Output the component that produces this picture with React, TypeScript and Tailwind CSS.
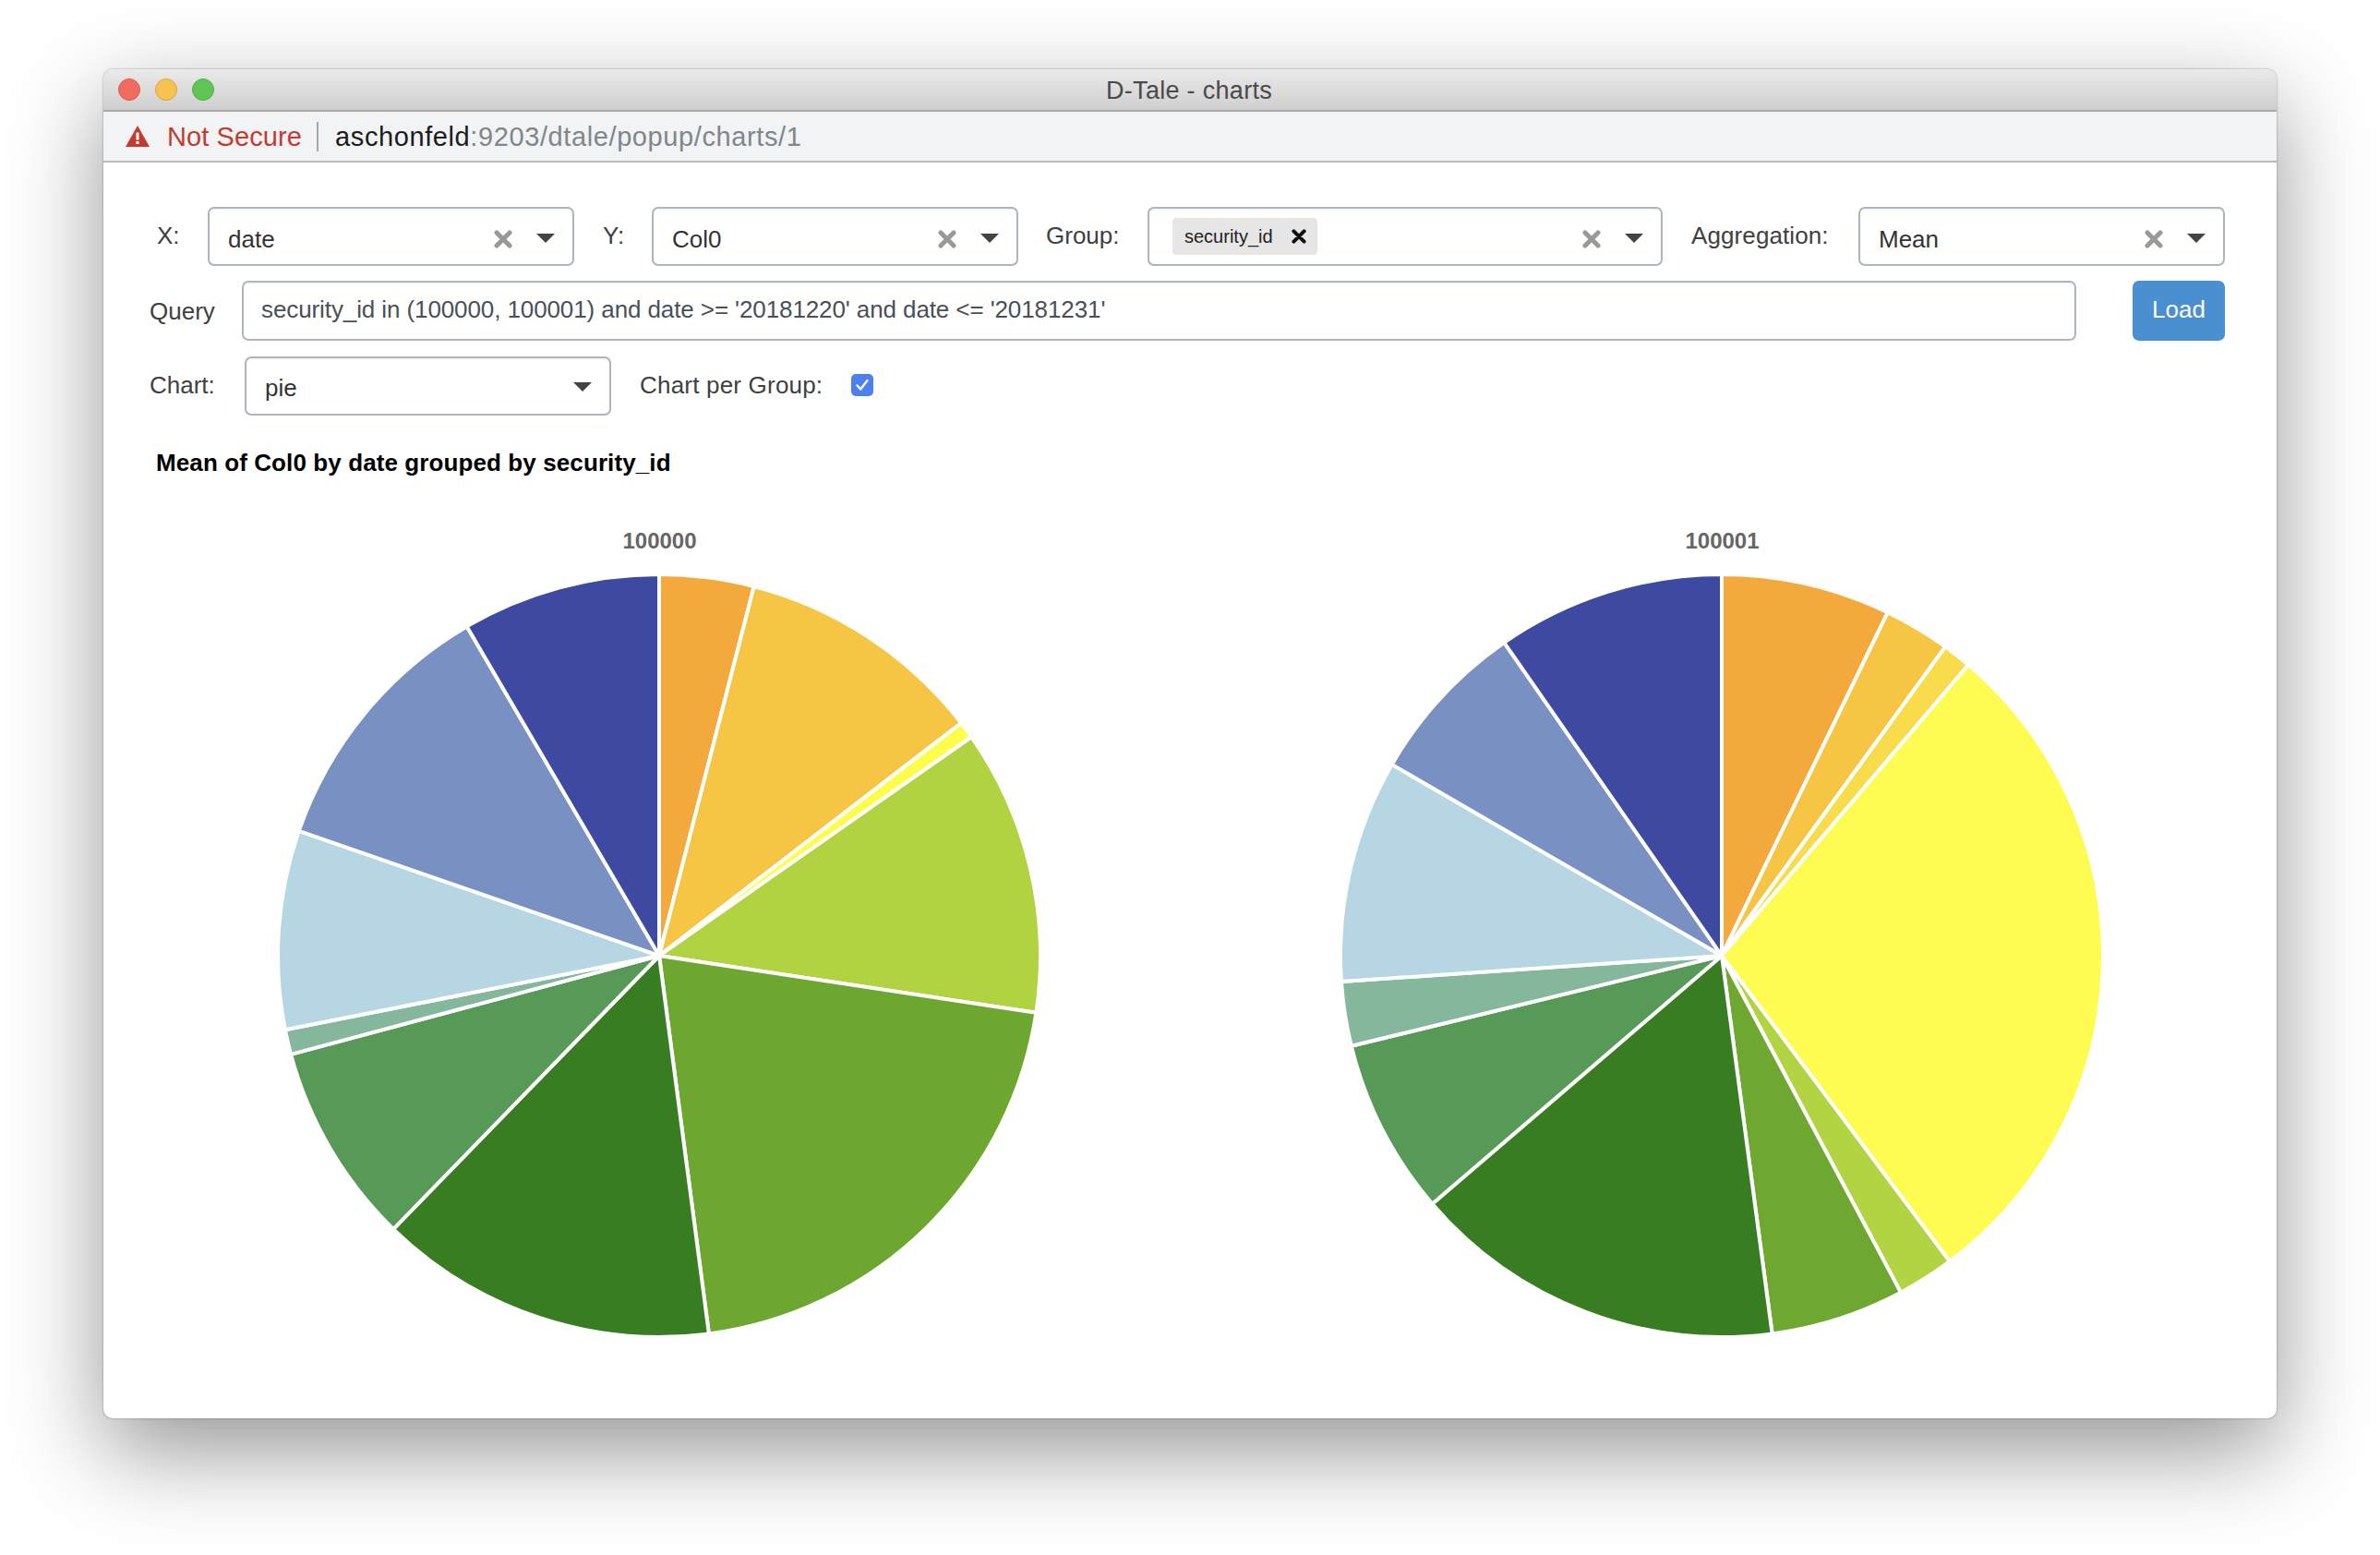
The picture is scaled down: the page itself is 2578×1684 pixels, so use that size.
import React from "react";

const COLORS = ["#F3A93B", "#F5C543", "#FDFD4C", "#B2D341", "#6DA72F", "#387D22", "#579A58", "#84B79B", "#B5D6E2", "#7990C3", "#3E4AA1"];

function Pie({ stops, colors }: { stops: number[]; colors: string[] }) {
  const cx = 415, cy = 415, r = 413;
  const pt = (a: number) => {
    const t = (a * Math.PI) / 180;
    return `${(cx + r * Math.sin(t)).toFixed(2)} ${(cy - r * Math.cos(t)).toFixed(2)}`;
  };
  const all = [0, ...stops, 360];
  return (
    <svg width="830" height="830" viewBox="0 0 830 830" className="block">
      {colors.map((c, i) => (
        <path
          key={i}
          d={`M${cx} ${cy}L${pt(all[i])}A${r} ${r} 0 ${all[i + 1] - all[i] > 180 ? 1 : 0} 1 ${pt(all[i + 1])}Z`}
          fill={c}
          stroke="#ffffff"
          strokeWidth="4"
          strokeLinejoin="round"
        />
      ))}
    </svg>
  );
}

function ClearX({ dark }: { dark?: boolean }) {
  return (
    <svg width="20" height="20" viewBox="0 0 20 20" className="block">
      <path d="M3 3L17 17M17 3L3 17" stroke={dark ? "#111111" : "#999999"} strokeWidth="5" strokeLinecap="round" />
    </svg>
  );
}

function Caret() {
  return (
    <svg width="20" height="10" viewBox="0 0 20 10" className="block">
      <path d="M0 0H20L10 10Z" fill="#444444" />
    </svg>
  );
}

function Select({ value, width, clear = true }: { value: string; width: string; clear?: boolean }) {
  return (
    <div className={`${width} h-[64px] shrink-0 flex items-center rounded-[7px] border-2 border-[#adb6bd] bg-white pl-[20px] pr-[19px] shadow-[inset_0_1px_2px_rgba(0,0,0,0.08)]`}>
      <span className="flex-1 pt-[6px] text-[26px] text-[#333333]">{value}</span>
      {clear && <span className="mt-[5px] mr-[26px]"><ClearX /></span>}
      <span className="mt-[3px]"><Caret /></span>
    </div>
  );
}

export default function App() {
  return (
    <div className="min-h-[1684px] bg-white pl-[112px] pt-[75px] font-['Liberation_Sans',Arial,sans-serif]">
      <div className="flex h-[1461px] w-[2354px] flex-col rounded-[10px] bg-white shadow-[0_35px_100px_rgba(0,0,0,0.42),0_0_2px_rgba(0,0,0,0.45)]">
        <div className="flex h-[46px] shrink-0 items-center rounded-t-[10px] border-b-2 border-[#a9a9a9] bg-gradient-to-b from-[#eaeaea] to-[#cfcfcf] pl-[16px]">
          <span className="h-[24px] w-[24px] rounded-full border border-[#dc5a50] bg-[#f06c60]" />
          <span className="ml-[16px] h-[24px] w-[24px] rounded-full border border-[#dca23f] bg-[#f7c250]" />
          <span className="ml-[16px] h-[24px] w-[24px] rounded-full border border-[#4fab45] bg-[#5fc655]" />
          <span className="ml-[966px] pt-[3px] text-[27px] leading-none tracking-[0.3px] text-[#4a4a4a]">D-Tale - charts</span>
        </div>
        <div className="flex h-[55px] shrink-0 items-center border-b-2 border-[#b9bcbf] bg-[#f1f3f5] pl-[24px]">
          <svg width="26" height="23" viewBox="0 0 26 23" className="block">
            <path d="M13 0L26 23H0Z" fill="#c53a2e" />
            <rect x="11.5" y="7.5" width="3" height="8" fill="#ffffff" />
            <rect x="11.5" y="17" width="3" height="3" fill="#ffffff" />
          </svg>
          <span className="ml-[19px] pt-[2px] text-[29px] leading-none tracking-[0.1px] text-[#c53a2e]">Not Secure</span>
          <span className="ml-[16px] h-[32px] w-[2px] bg-[#a4a8ab]" />
          <span className="ml-[18px] pt-[2px] text-[29px] leading-none tracking-[0.6px] text-[#7f868c]">
            <span className="text-[#1c1c1c]">aschonfeld</span>:9203/dtale/popup/charts/1
          </span>
        </div>

        <div className="flex flex-col pt-[48px]">
          <div className="flex h-[64px] items-center text-[26px] text-[#404040]">
            <span className="ml-[58px] w-[55px] pb-[2px]">X:</span>
            <Select value="date" width="w-[397px]" />
            <span className="ml-[31px] w-[53px] pb-[2px]">Y:</span>
            <Select value="Col0" width="w-[397px]" />
            <span className="ml-[30px] w-[110px] pb-[2px]">Group:</span>
            <div className="flex h-[64px] w-[558px] shrink-0 items-center rounded-[7px] border-2 border-[#adb6bd] bg-white pl-[25px] pr-[19px] shadow-[inset_0_1px_2px_rgba(0,0,0,0.08)]">
              <div className="flex h-[40px] w-[157px] items-center rounded-[4px] bg-[#e6e6e6] pl-[13px]">
                <span className="text-[20px] text-[#222222]">security_id</span>
                <span className="ml-[18px] scale-[0.8]"><ClearX dark /></span>
              </div>
              <span className="flex-1" />
              <span className="mt-[5px] mr-[26px]"><ClearX /></span>
              <span className="mt-[3px]"><Caret /></span>
            </div>
            <span className="ml-[31px] w-[181px] pb-[2px] tracking-[0.1px]">Aggregation:</span>
            <Select value="Mean" width="w-[397px]" />
          </div>

          <div className="mt-[16px] flex h-[65px] items-center text-[26px] text-[#404040]">
            <span className="ml-[50px] w-[100px] pt-[2px]">Query</span>
            <div className="flex h-[65px] w-[1987px] shrink-0 items-center rounded-[7px] border-2 border-[#adb6bd] bg-white pl-[19px] pb-[3px] tracking-[-0.1px] text-[#495057] shadow-[inset_0_1px_2px_rgba(0,0,0,0.08)]">
              security_id in (100000, 100001) and date &gt;= '20181220' and date &lt;= '20181231'
            </div>
            <button className="ml-[61px] h-[65px] w-[100px] rounded-[7px] bg-[#4a8fcf] pb-[2px] text-[26px] text-white">Load</button>
          </div>

          <div className="mt-[17px] flex h-[63px] items-center text-[26px] text-[#404040]">
            <span className="ml-[50px] w-[103px]">Chart:</span>
            <Select value="pie" width="w-[397px]" clear={false} />
            <span className="ml-[31px] w-[229px] tracking-[0.2px]">Chart per Group:</span>
            <span className="mb-[2px] flex h-[24px] w-[24px] items-center justify-center rounded-[5px] bg-[#4a81ef]">
              <svg width="16" height="16" viewBox="0 0 16 16" className="block">
                <path d="M2.5 8.5L6.2 12.5L13.5 3" fill="none" stroke="#ffffff" strokeWidth="2.4" strokeLinecap="round" strokeLinejoin="round" />
              </svg>
            </span>
          </div>

          <div className="ml-[57px] mt-[37px] text-[26px] font-bold leading-[30px] tracking-[0.1px] text-black">
            Mean of Col0 by date grouped by security_id
          </div>

          <div className="ml-[26px] mt-[55px] flex">
            <div className="flex w-[1151px] flex-col items-center">
              <div className="h-[30px] pl-[2px] text-[24px] font-bold leading-[30px] text-[#666666]">100000</div>
              <div className="mt-[19px]">
                <Pie stops={[14.4, 52.4, 55.0, 98.6, 172.5, 224.2, 255.0, 258.8, 289.1, 329.7]} colors={COLORS} />
              </div>
            </div>
            <div className="flex w-[1151px] flex-col items-center">
              <div className="h-[30px] pl-[2px] text-[24px] font-bold leading-[30px] text-[#666666]">100001</div>
              <div className="mt-[19px]">
                <Pie
                  stops={[25.8, 35.9, 40.3, 143.3, 152.0, 172.4, 229.4, 256.3, 266.1, 300.1, 325.2]}
                  colors={["#F3A93B", "#F5C543", "#F9DC4B", "#FEFC50", "#B3D442", "#6EA831", "#387D22", "#579A58", "#84B79B", "#B5D6E2", "#7990C3", "#3E4AA1"]}
                />
              </div>
            </div>
          </div>
        </div>
      </div>
    </div>
  );
}
